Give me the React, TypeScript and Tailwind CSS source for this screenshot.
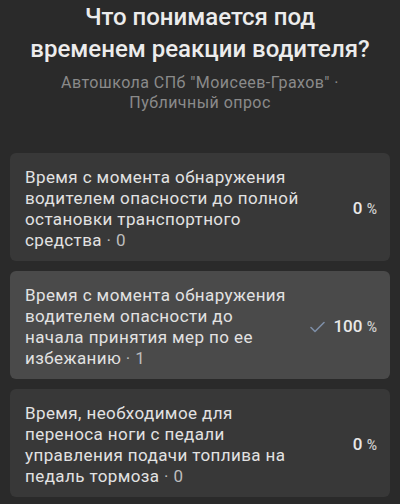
import React from "react";

const options = [
  {
    lines: ["Время с момента обнаружения", "водителем опасности до полной", "остановки транспортного", "средства"],
    count: 0,
    pct: "0",
    selected: false,
  },
  {
    lines: ["Время с момента обнаружения", "водителем опасности до", "начала принятия мер по ее", "избежанию"],
    count: 1,
    pct: "100",
    selected: true,
  },
  {
    lines: ["Время, необходимое для", "переноса ноги с педали", "управления подачи топлива на", "педаль тормоза"],
    count: 0,
    pct: "0",
    selected: false,
  },
];

export default function App() {
  return (
    <div className="w-[400px] h-[504px] overflow-hidden bg-[#2a2a2a] text-[#e6e6e6]" style={{ fontFamily: "Roboto, 'Noto Sans', sans-serif" }}>
      <div className="pt-[1px] text-center">
        <h1 className="text-[24px] leading-[32px] font-medium text-[#ececec]">
          Что понимается под<br />временем реакции водителя?
        </h1>
        <p className="mt-[8px] text-[16px] leading-[20px] tracking-[0.45px] text-[#8a8a8a]">
          Автошкола СПб "Моисеев-Грахов" ·<br />Публичный опрос
        </p>
      </div>
      <div className="mt-[40px] flex flex-col gap-[10px] px-[10px]">
        {options.map((o, i) => (
          <div
            key={i}
            className={`flex items-center rounded-[6px] pl-[15px] pr-[13px] pt-[14px] pb-[10px] ${o.selected ? "bg-[#4a4a4a]" : "bg-[#383838]"}`}
          >
            <div className="flex-1 whitespace-nowrap text-[17px] leading-[21px] tracking-[0.4px] text-[#e2e2e2]">
              {o.lines.map((l, j) => (
                <div key={j}>
                  {l}
                  {j === o.lines.length - 1 && <span className="text-[#bdbdbd]"> · {o.count}</span>}
                </div>
              ))}
            </div>
            <div className="flex shrink-0 items-center gap-[8px]">
              {o.selected && (
                <svg width="15" height="12" viewBox="0 0 15 12" fill="none">
                  <path d="M1 6.5 L5 10.5 L14 1.5" stroke="#7d8ea6" strokeWidth="1.6" strokeLinecap="round" strokeLinejoin="round" />
                </svg>
              )}
              <span className="text-[17px] font-medium text-[#e8e8e8]">
                {o.pct} <span className="text-[14px] text-[#cfcfcf]">%</span>
              </span>
            </div>
          </div>
        ))}
      </div>
    </div>
  );
}
